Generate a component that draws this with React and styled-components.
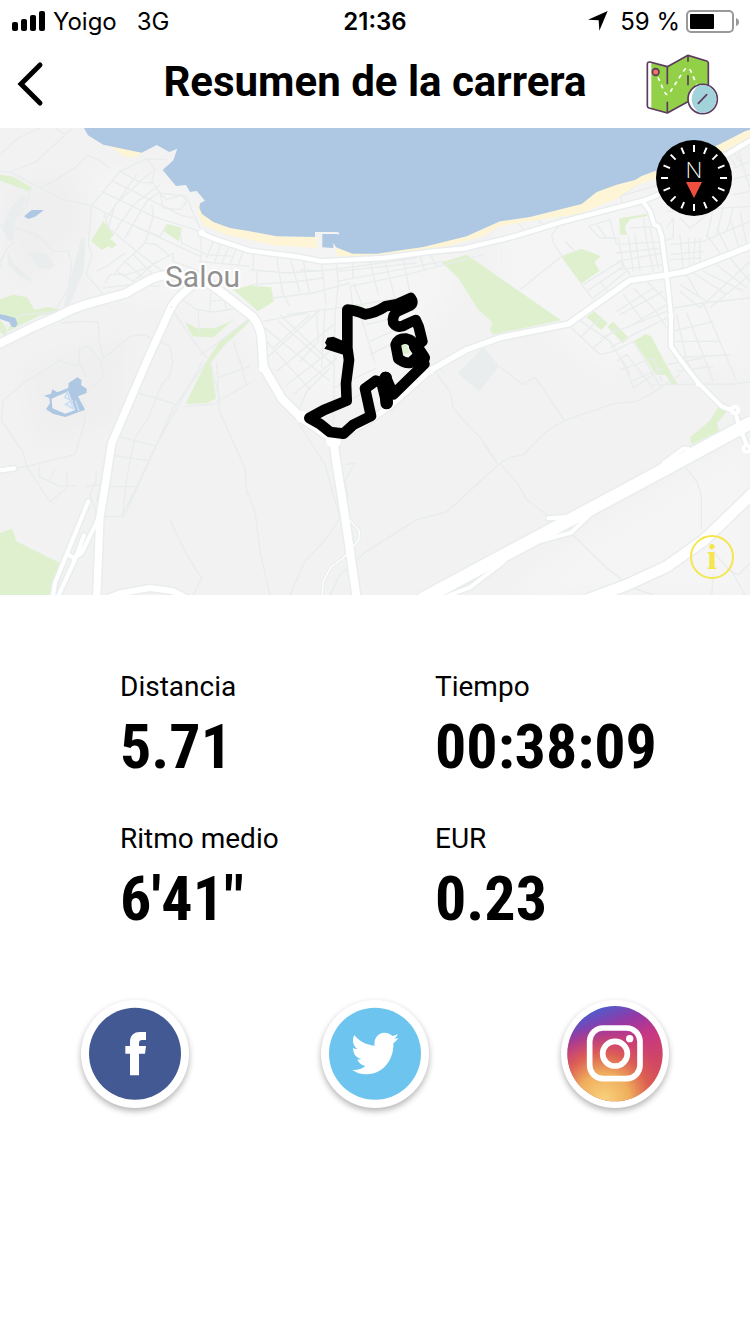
import React from "react";
import styled, { createGlobalStyle } from "styled-components";

const GlobalStyle = createGlobalStyle`
  *, *::before, *::after { box-sizing: border-box; }
  body {
    margin: 0;
    background: #fff;
    color: #000;
    font-family: Roboto, "Liberation Sans", sans-serif;
  }
`;

const Screen = styled.main`
  display: flex;
  flex-direction: column;
  min-height: 100vh;
  background: #fff;
`;

const StatusBar = styled.div`
  display: grid;
  grid-template-columns: 1fr auto 1fr;
  align-items: center;
  height: 40px;
  padding: 0 11px;
  font-family: Inter, "Liberation Sans", sans-serif;
  font-size: 24px;
  line-height: 40px;
`;

const StatusGroup = styled.div`
  display: flex;
  align-items: center;
  justify-content: ${(p) => (p.$end ? "flex-end" : "flex-start")};
  gap: 8px;
`;

const StatusText = styled.span`
  padding-top: 2px;
  margin-left: ${(p) => (p.$spaced ? 12 : 0)}px;
`;

const Battery = styled.span`
  display: flex;
  margin-left: -2px;
`;

const Clock = styled.time`
  padding-top: 2px;
  font-weight: 600;
`;

const Header = styled.header`
  display: grid;
  grid-template-columns: 104px 1fr 104px;
  align-items: center;
  height: 88px;
`;

const Title = styled.h1`
  margin: 0;
  padding-bottom: 4px;
  font-size: 42px;
  font-weight: 700;
  line-height: 48px;
  text-align: center;
  white-space: nowrap;
`;

const IconButton = styled.button`
  display: flex;
  align-items: center;
  justify-content: center;
  padding: 0;
  border: 0;
  background: none;
  color: inherit;
  cursor: pointer;
`;

const BackButton = styled(IconButton)`
  width: 60px;
  height: 60px;
`;

const MapButton = styled(IconButton)`
  justify-content: flex-start;
`;

const MapPanel = styled.section`
  position: relative;
  width: 100%;
  aspect-ratio: 750 / 467;
  overflow: hidden;
  background: #f3f3f3;
`;

const MapCanvas = styled.svg`
  display: block;
  width: 100%;
  height: 100%;
`;

const CompassButton = styled(IconButton)`
  position: absolute;
  top: 12px;
  right: 18px;
  width: 76px;
  height: 76px;
  border-radius: 50%;
`;

const InfoButton = styled(IconButton)`
  position: absolute;
  right: 16px;
  bottom: 16px;
  width: 44px;
  height: 44px;
  border: 2px solid #f4e64c;
  border-radius: 50%;
  color: #f4e64c;
  font-family: "Liberation Serif", serif;
  font-size: 36px;
  font-weight: 700;
  line-height: 40px;
`;

const Stats = styled.dl`
  display: grid;
  grid-template-columns: 1fr 1fr;
  row-gap: 40px;
  margin: 0;
  padding: 76px 0 65px 16%;
`;

const Stat = styled.div`
  display: flex;
  flex-direction: column;
  gap: 8px;
`;

const StatLabel = styled.dt`
  font-size: 28px;
  line-height: 32px;
`;

const StatValue = styled.dd`
  margin: 0;
  font-family: "Roboto Condensed", "Liberation Sans Narrow", Roboto, sans-serif;
  font-size: 62px;
  font-weight: 700;
  line-height: 72px;
`;

const ShareRow = styled.nav`
  display: grid;
  grid-template-columns: repeat(3, 1fr);
  justify-items: center;
  padding: 0 15px 40px;
`;

const ShareButton = styled(IconButton)`
  width: 108px;
  height: 108px;
  border-radius: 50%;
  background: #fff;
  box-shadow: 0 3px 6px rgba(0, 0, 0, 0.3);
`;

/* Map geometry, drawn on a 2250 x 1401 grid. */

const parks = [
  "M0 140 L40 146 L92 178 L88 190 L0 158Z",
  "M310 279 L342 320 L330 332 L351 350 L336 361 L326 355 L305 366 L273 338Z",
  "M502 287 L547 300 L536 340 L490 309Z",
  "M0 513 L40 500 L82 508 L103 546 L142 537 L180 545 L178 556 L120 562 L20 612 L40 575 L0 555Z",
  "M0 575 L20 600 L18 625 L0 612Z",
  "M555 583 L590 600 L645 601 L699 576 L640 628 L578 625Z",
  "M750 570 L745 585 L670 655 L632 705 L648 812 L620 825 L557 828 L620 700 L660 640Z",
  "M700 485 L750 472 L813 478 L822 520 L774 550Z",
  "M1325 403 L1400 380 L1500 450 L1683 577 L1500 615 L1478 620 L1470 605 L1477 582 L1435 545 L1375 450Z",
  "M1683 385 L1745 362 L1803 385 L1783 403 L1799 428 L1743 467Z",
  "M1858 271 L1940 258 L1942 264 L1890 274 L1874 297 L1882 321 L1860 319Z",
  "M1760 568 L1783 550 L1823 586 L1804 607Z",
  "M1822 596 L1839 581 L1887 630 L1868 646Z",
  "M1902 638 L1938 618 L1955 626 L1998 710 L2032 768 L2015 770 L1998 740 L1968 740Z",
  "M0 1215 L36 1202 L49 1240 L178 1304 L148 1401 L0 1401Z",
  "M2070 928 L2128 880 L2155 838 L2180 852 L2150 885 L2158 908 L2075 950Z",
  "M1058 530 L1075 528 L1092 545 L1062 572Z",
  "M1198 645 L1216 642 L1230 675 L1206 680Z",
];

const shades = [
  "M245 326 L257 335 L250 430 L212 525 L188 545 L210 460 L230 380Z",
  "M70 200 L80 215 L45 275 L42 335 L22 338 L10 290 L30 240Z",
  "M80 370 L140 378 L164 410 L150 424 L118 420Z",
  "M22 370 L40 405 L102 462 L60 447 L24 410Z",
  "M1450 657 L1497 715 L1438 790 L1374 736Z",
];

const ponds = [
  "M72 265 L95 246 L132 246 L105 266 L85 273Z",
  "M0 558 L22 563 L46 570 L53 588 L46 598 L35 596 L28 583 L0 573Z",
  "M132 803 L153 797 L157 784 L172 793 L205 780 L206 765 L232 748 L245 756 L243 771 L260 782 L260 795 L234 805 L255 845 L196 867 L160 858 L138 844 L150 825 L148 810Z",
];

const streets = [
  /* north-west countryside */
  "M0 80 L55 30 L120 0 M165 0 L192 18 L215 5 M0 130 L30 132 L110 100 L195 20 M30 132 L120 180 L190 215 L275 232",
  "M330 120 L300 98 L262 82 L230 115 L160 160 L120 180 M275 232 L265 350 L276 380 L258 440 L312 500",
  "M95 175 L78 240 L40 275 L45 300 L110 320 L160 370 L205 370 L215 410 L205 480 L165 550 M0 400 L22 360 L40 345 L0 290",
  "M0 420 L12 380 M110 320 L100 345 M0 610 L60 560 L180 550 M185 585 L240 580 L295 582 L297 640 L310 690 L350 660 L390 625 L430 620 L510 655 L518 705",
  /* western old town */
  "M275 232 L360 130 L440 92 L500 95 M440 92 L465 125 L455 162 M360 130 L420 163 L460 165 L480 195 L560 205",
  "M340 160 L460 220 L545 262 L580 270 M305 190 L460 265 L600 310 M275 232 L312 252 L460 320 L600 385 M312 252 L325 300 L410 370 L500 440",
  "M325 300 L345 230 L455 130 M345 310 L400 230 L480 170 M375 330 L440 220 L480 190 M435 345 L460 265 L455 230 M320 270 L410 140",
  "M480 195 L500 215 L545 200 L560 220 L540 245 L490 240 L480 195 M560 205 L575 245 L600 300 M410 298 L480 325 L500 290",
  "M340 440 L375 400 L410 370 L435 345 L470 350 L510 385 M315 465 L330 440 L380 440 L440 420 L520 375 M375 400 L430 450 M400 380 L460 440 M350 430 L400 460 L470 400",
  "M290 430 L320 415 L375 375 M310 480 L390 470 L480 475 M520 375 L520 400 L600 430 M540 300 L545 345 L620 380 M600 320 L605 370 L600 400 L750 415",
  "M640 340 L620 390 M662 350 L645 400 M685 360 L665 405 M707 365 L690 410 M730 370 L712 415 M620 380 L700 385",
  "M540 510 L590 545 L640 552 L720 540 M632 495 L630 545 M595 545 L597 615 M665 490 L680 545 M630 520 L680 515",
  "M520 550 L600 665 L620 690 M750 570 L640 655 L600 680 M700 640 L720 705",
  /* seafront grid */
  "M750 425 L860 435 L1000 425 L1250 390 M750 470 L880 462 L970 450 M762 372 L758 430 M772 430 L770 480 M830 385 L845 480 L850 500",
  "M870 390 L900 495 M910 395 L918 450 L930 500 M965 405 L978 530 M1010 410 L1015 470 M1058 405 L1058 450 M1110 400 L1135 500 M1155 400 L1185 510",
  "M1210 395 L1230 495 M1260 385 L1275 430 M1290 380 L1310 415 M900 425 L960 430 M1010 430 L1250 405 M1010 460 L1330 400",
  "M1050 475 L1220 440 L1450 380 M820 510 L940 495 L1050 465 M850 500 L870 535 M860 560 L1050 535 L1250 500 M790 580 L920 555",
  "M1015 470 L1005 560 L1000 900 M1050 475 L1060 540 M1060 465 L1090 540 M1075 540 L1125 705 M1100 590 L1180 570 M1110 640 L1200 600 M1110 680 L1170 650",
  "M795 600 L990 760 M800 640 L930 785 M840 560 L1000 710 M835 580 L960 690 M820 660 L930 560 M800 690 L960 545 M830 730 L1000 590 M860 770 L1030 640",
  "M880 800 L1010 690 M900 840 L920 790 L990 720 M950 560 L955 640 L900 700 M975 540 L965 720 M1000 780 L1130 720 M1000 840 L1100 790",
  /* eastern grid */
  "M1545 275 L1580 315 M1610 268 L1635 300 M1670 250 L1685 275 M1660 345 L1655 320 L1680 290 L1720 280 M1695 340 L1725 370 M1685 385 L1560 485 M1660 345 L1690 390",
  "M1765 295 L1800 330 L1850 330 M1765 295 L1830 275 L1850 350 M1790 290 L1820 330 M1850 350 L1990 340 M1848 375 L1990 360 M1850 400 L1990 375",
  "M1855 425 L1990 410 M1855 330 L1870 410 L1890 440 M1885 325 L1900 430 M1905 320 L1920 430 M1930 270 L1940 340 L1960 430 M1950 300 L1975 420 M1890 300 L1980 295",
  "M1750 470 L1860 400 L1890 440 M1760 490 L1870 415 M1780 510 L1880 430 M1743 467 L1780 515 M1800 460 L1830 500 M1860 205 L1980 170 M1870 230 L1860 205 L1900 180",
  "M2000 250 L2250 235 M2000 300 L2020 270 L2020 330 L1990 340 M2040 270 L2070 300 L2110 270 L2130 240 M2140 240 L2120 330 M2170 235 L2150 320 M2200 240 L2180 310",
  "M2010 350 L2110 340 L2250 280 M2010 380 L2110 370 M2010 395 L2105 390 M2040 320 L2050 430 M2065 330 L2070 425 M2085 330 L2080 420 M2100 330 L2100 410 M2120 320 L2170 390 M2150 300 L2190 380 M2190 270 L2220 370 M2220 250 L2240 350",
  "M2060 440 L2100 510 M2080 435 L2180 500 M2110 430 L2230 490 M2150 410 L2240 480 M2190 390 L2250 460 M2040 470 L2120 520 M2040 490 L2100 540 L2250 400 M2130 540 L2250 440 M2020 540 L2110 525 L2250 510",
  "M2190 85 L2210 120 M2200 75 L2230 115 M2200 120 L2250 100 M2180 160 L2250 140 M2200 200 L2250 190 M2215 70 L2250 180",
  "M1800 630 L2013 545 M1830 660 L1900 620 L2010 565 M1900 480 L1960 540 L2000 600 M1870 500 L1930 580 M1850 550 L1960 480 M1860 560 L1990 490 M1880 600 L2000 530 M1940 460 L2010 530",
  "M1715 600 L1800 680 L1840 670 M1730 570 L1830 640 L1890 740 M1740 630 L1800 570 M1780 660 L1850 600 M1840 670 L1900 640 L1985 780 M1850 700 L1880 680 L1960 780",
  "M1860 726 L1960 690 M1890 760 L1990 720 M1900 780 L1960 740 M1870 700 L1900 780 M2030 560 L2060 700 L2100 760 M2060 555 L2140 760 M2110 525 L2210 760 M2020 610 L2140 580 M2020 640 L2160 640",
  "M2020 690 L2190 680 M2030 730 L2140 715 M2000 710 L2110 690 M1960 690 L1985 760 M2040 740 L1950 800 M1960 770 L2200 768 L2250 762",
  /* southern countryside */
  "M1500 716 L1568 770 L1605 748 L1695 880 M1500 1006 L1530 988 L1570 980 L1645 905 L1700 875 L1845 826 L1910 820 L1985 780",
  "M1500 1006 L1555 1070 L1580 1115 L1640 1160 M1718 1220 L1820 1320 L1900 1380 L1960 1401 M2055 1016 L2090 1060 L2104 1100 L2104 1205 M2140 1270 L2190 1330 L2215 1340 L2250 1305 M2140 1340 L2135 1401 M2190 1320 L2235 1401",
  "M1310 735 L1350 790 L1360 840 L1390 875 L1450 940 L1495 1010 L1340 1152 L1250 1175 L1100 1270 L1020 1340 L990 1401",
  "M895 885 L975 1010 L1020 1170 L980 1230 L915 1300 L870 1401 M750 1115 L765 1150 L780 1270 L810 1401",
  "M650 705 L658 850 L735 1020 L740 1090 L750 1110 M510 1175 L560 1280 L605 1350 L580 1401 M650 750 L750 715",
  "M620 700 L520 840 L410 1076 L365 1165 M610 696 L470 950 L375 1160 M555 835 L640 828 L750 765 M520 696 L510 740 L480 780 L445 870 L405 930 L380 1050 L368 1165",
  "M415 795 L525 828 M355 925 L470 955 M335 982 L445 998 M320 1076 L410 1076 M315 1166 L372 1166 M630 700 L660 815 M720 696 L740 775",
  "M235 696 L260 750 M300 696 L312 750 L275 775 M180 698 L70 765 L8 820 L5 880 L68 970 L80 1015 L225 980 L255 880 L250 810",
  "M45 1021 L80 1015 L150 1122 L200 1080 L200 1030 M120 1010 L115 1045 L180 1075 L230 1072 M165 1020 L148 1060 M258 1074 L310 1070 M288 1025 L288 1060 L270 1100 L300 1180",
  "M180 698 L235 715 L240 660 L265 655 L300 696 M325 946 L290 1120 M1310 705 L1330 735 M1035 1010 L1065 1005 L1050 1030 L1035 1060 L1045 1110 M1450 950 L1495 1010",
];

const majorRoads = [
  { w: 24, d: "M0 646 L100 597 L180 562 Q215 542 255 530 L375 497 L450 455 Q480 440 520 440 L600 448 L650 482 L757 565 Q778 590 784 625 L790 716 L845 811 L900 866 L1000 935 L1008 996 L1035 1166 L1070 1410" },
  { w: 22, d: "M570 478 Q530 510 515 535 L440 700 L335 946 L315 1076 L300 1166 L290 1410" },
  { w: 16, d: "M1000 935 L1090 890 L1170 835 L1290 728 L1400 665 L1500 629 L1705 588 L1890 457 L2000 441 L2060 430 L2250 355" },
  { w: 13, d: "M603 316 L650 335 L750 368 L900 387 L965 400 L1150 390 L1300 370 L1390 362 L1500 336 L1550 323 L1680 283 L1930 218 L2000 190 L2180 80 L2250 38" },
  { w: 12, d: "M1930 222 L1950 250 L1962 290 L1975 295 L1985 325 L2000 441 L2013 560 L2013 655 L2045 700 L2095 765 L2165 835 L2205 850 L2216 890 L2240 950 L2240 962" },
  { w: 12, d: "M265 1120 L165 1365 L158 1410 M252 1222 L228 1288 L172 1410 M295 1172 L245 1275 L222 1290 L205 1280" },
  { w: 13, d: "M0 1027 L42 1021" },
  { w: 12, d: "M1645 1171 L1700 1167 M1595 1246 L1713 1214 L1780 1150 M1990 1006 L2050 962 L2065 962 M1340 1405 L1410 1378 L1510 1302" },
  { w: 18, d: "M320 1412 L360 1396 L450 1380 L520 1390 L560 1410" },
  { w: 38, d: "M1270 1412 L1500 1288 L1800 1128 L1960 1042 L2250 885" },
  { w: 32, d: "M1770 1412 L1880 1371 L2000 1316 L2110 1238 L2180 1171 L2260 1094" },
];

const minorRoad = "M1050 1178 L1078 1208 L1076 1236 L1030 1290 L992 1318 L970 1360 L966 1401";

const roundabouts = [
  [605, 315, 9], [515, 537, 11], [790, 720, 14], [905, 866, 18], [1000, 938, 22],
  [2000, 441, 9], [2013, 564, 8], [2095, 767, 8], [2205, 846, 16], [2240, 962, 15], [1290, 728, 11],
];

const run =
  "M1042 660 L1042 545 Q1065 546 1095 559 Q1125 556 1157 535 L1190 529 L1232 510 Q1245 528 1225 535 L1192 550 Q1175 562 1180 585 Q1195 605 1220 588 L1247 576 L1256 596 L1267 640 L1245 658 " +
  "Q1240 635 1220 632 Q1195 630 1187 650 L1195 692 Q1215 707 1232 704 L1262 676 L1273 708 L1180 799 L1157 747 L1160 827 L1145 765 L1128 758 L1095 782 L1113 864 L1060 890 L1030 917 L990 912 L960 888 L928 870 L972 846 L1040 818 L1038 766 L1047 696 Z";

function RouteMap() {
  return (
    <MapCanvas viewBox="0 0 2250 1401" preserveAspectRatio="xMidYMid slice" role="img" aria-label="Recorrido de la carrera en Salou">
      <defs>
        <filter id="relief" x="-20%" y="-20%" width="140%" height="140%">
          <feGaussianBlur stdDeviation="30" />
        </filter>
      </defs>
      <rect width="2250" height="1401" fill="#f2f2f2" />
      <g fill="#f5f5f5" filter="url(#relief)">
        <path d="M300 120 L560 190 L640 340 L1400 400 L1180 800 L900 820 L700 560 L280 480Z" />
        <path d="M1500 300 L2250 100 L2250 700 L1800 720 L1500 480Z" />
        <path d="M1750 1240 L2250 940 L2250 1401 L1550 1401Z" />
      </g>
      <g fill="#efefef" filter="url(#relief)">
        <path d="M0 180 L220 130 L250 300 L60 480Z" />
        <path d="M60 720 L380 620 L360 880 L120 960Z" />
      </g>
      {shades.map((d) => <path key={d} d={d} fill="#eaeded" />)}
      {parks.map((d) => <path key={d} d={d} fill="#def0cd" />)}
      <g fill="none" stroke="#e8ecec" strokeWidth="4" strokeLinejoin="round">
        {streets.map((d) => <path key={d} d={d} />)}
      </g>
      {ponds.map((d) => <path key={d} d={d} fill="#aec7e2" />)}
      <path d="M155 812 L205 790 L226 846 L196 857 L157 841Z" fill="#f1f1f1" />
      <path d="M202 792 L220 842 L197 829 L216 818 L195 808Z M226 818 L237 850" fill="none" stroke="#c9ddf5" strokeWidth="5" />
      <g fill="#fdf5d6">
        <path d="M318 48 L435 70 L400 90 L372 84Z" />
        <path d="M596 225 L594 260 L612 292 L680 320 L750 335 L820 352 L952 360 L952 320 L800 300Z" />
        <path d="M1002 352 L1014 386 L1150 386 L1300 366 L1450 325 L1500 294 L1620 275 L1740 257 L1850 212 L1910 172 L1980 148 L2160 75 L2250 35 L2250 0 L1500 250Z" />
      </g>
      <path
        fill="#aec7e2"
        d="M252 0 L264 22 L310 50 L425 74 L470 51 L508 72 L532 62 L520 97 L488 126 L528 174 L558 171 L570 192 L590 189 L605 206 L615 218 L600 226 L598 240 L606 258 L640 282 L690 300 L750 310 L830 325 L945 327 L950 313 L966 313 L966 358 L1000 360 L1000 345 L1008 358 L1058 377 L1130 377 L1270 357 L1400 325 L1500 280 L1590 267 L1745 228 L1790 192 L1850 170 L1905 156 L1925 144 L2060 94 L2160 48 L2235 10 L2250 5 L2250 0Z"
      />
      <path d="M948 315 H1012 L1017 318" fill="none" stroke="#f3f3f3" strokeWidth="6" />
      <path d="M945 312 H967 V360 H952 V326 H945Z" fill="#f3f3f3" />
      <g fill="none" strokeLinejoin="round" strokeLinecap="round">
        {majorRoads.map((r) => (
          <path key={r.d} d={r.d} stroke="#e9eded" strokeWidth={r.w + 9} />
        ))}
        <path d={minorRoad} stroke="#e9eded" strokeWidth="10" />
        {majorRoads.map((r) => (
          <path key={r.d} d={r.d} stroke="#fff" strokeWidth={r.w} />
        ))}
        <path d={minorRoad} stroke="#fff" strokeWidth="4" />
      </g>
      {roundabouts.map(([cx, cy, r]) => <circle key={`${cx}-${cy}`} cx={cx} cy={cy} r={r} fill="#fff" />)}
      <g fill="#eceeee">
        <circle cx="514" cy="537" r="3" />
        <circle cx="2205" cy="846" r="4" />
        <circle cx="2240" cy="962" r="4" />
      </g>
      <text x="495" y="477" fontFamily="Roboto, sans-serif" fontSize="90" fill="#929292" stroke="#fff" strokeWidth="12" strokeLinejoin="round" paintOrder="stroke">Salou</text>
      <g fill="none" stroke="#000">
        <path d={run} strokeWidth="32" strokeLinejoin="round" />
        <path d="M1157 750 L1160 825" strokeWidth="38" strokeLinecap="round" />
        <path d="M1247 655 L1270 690" strokeWidth="40" strokeLinecap="round" />
      </g>
      <path d="M975 644 L982 629 L1000 626 L1032 640 L1044 660 L1042 684 L973 662 L980 652Z" />
    </MapCanvas>
  );
}

function SignalIcon() {
  return (
    <svg width="34" height="20" viewBox="0 0 34 20" aria-hidden="true">
      <rect x="1" y="11" width="6" height="9" rx="2" />
      <rect x="10" y="8" width="6" height="12" rx="2" />
      <rect x="19" y="4" width="6" height="16" rx="2" />
      <rect x="28" y="0" width="6" height="20" rx="2" />
    </svg>
  );
}

function LocationIcon() {
  return (
    <svg width="24" height="20" viewBox="0 0 72 60" aria-hidden="true">
      <path d="M0 26 L59 0 L34 59 L32 28Z" />
    </svg>
  );
}

function BatteryIcon() {
  return (
    <svg width="53" height="24" viewBox="0 0 53 24" aria-hidden="true">
      <rect x="1" y="2" width="46" height="21" rx="4" fill="none" stroke="#999" strokeWidth="2" />
      <rect x="4" y="5" width="24" height="15" rx="1" />
      <path d="M50 9 Q53 10 53 13 Q53 16 50 17Z" fill="#999" />
    </svg>
  );
}

function ChevronIcon() {
  return (
    <svg width="28" height="46" viewBox="0 0 28 46" fill="none" stroke="#000" strokeWidth="5" strokeLinecap="round" aria-hidden="true">
      <path d="M24 4 L5 23 L24 42" />
    </svg>
  );
}

function MapIcon() {
  return (
    <svg width="73" height="61" viewBox="48 40 219 183" fill="none" stroke="#5d3a5e" strokeWidth="6" strokeLinejoin="round" strokeLinecap="round" aria-hidden="true">
      <path d="M52 70 Q52 63 60 64 L112 78 L174 44 L230 61 Q235 63 235 68 V175 L174 183 L112 217 L57 202 Q52 200 52 195Z" fill="#92d147" stroke="none" />
      <path d="M52 68 L64 66 V203 L52 198Z" fill="#fff" stroke="none" />
      <path d="M172 184 L112 217 L57 202 Q52 200 52 195 V70 Q52 63 60 64 L112 78 L174 44 L230 61 Q235 63 235 68 V140" strokeWidth="5" />
      <path d="M112 78 V131 M112 183 V216 M174 45 V63 M174 104 V134" strokeWidth="5" strokeLinecap="butt" />
      <path d="M84 110 L101 149 Q110 170 120 155 L160 92 Q172 73 183 92 L200 132" stroke="#fff" strokeWidth="5" strokeDasharray="12 12" strokeLinecap="butt" />
      <circle cx="77" cy="94" r="10" fill="#f07663" strokeWidth="5" />
      <circle cx="218" cy="175" r="44" fill="#fff" strokeWidth="5" />
      <path d="M208 134 A42 42 0 1 1 208 216 A48 48 0 0 1 208 134Z" fill="#a3d3da" stroke="none" />
      <path d="M205 188 L230 162" strokeWidth="5" />
    </svg>
  );
}

const ticks = Array.from({ length: 16 }, (_, i) => i * 22.5);

function CompassIcon() {
  return (
    <svg width="76" height="76" viewBox="0 0 76 76" aria-hidden="true">
      <circle cx="38" cy="38" r="38" />
      {ticks.map((a) => (
        <path key={a} d="M38 5 V12" stroke="#fff" strokeWidth="2" transform={`rotate(${a} 38 38)`} />
      ))}
      <text x="38" y="38" textAnchor="middle" fontFamily="Inter, sans-serif" fontWeight="200" fontSize="22" fill="#fff">N</text>
      <path d="M30 42 H46 L38 58Z" fill="#ef4f3f" />
    </svg>
  );
}

function FacebookIcon() {
  return (
    <svg width="108" height="108" viewBox="0 0 324 324" aria-hidden="true">
      <circle cx="162" cy="161" r="138" fill="#435994" />
      <path d="M147 226 V161 H133 V138 H147 V126 C147 106 159 96 177 96 H195 V120 H183 Q174 120 174 130 V138 H195 L192 161 H174 V226Z" fill="#fff" />
    </svg>
  );
}

function TwitterIcon() {
  return (
    <svg width="108" height="108" viewBox="783 60 324 324" aria-hidden="true">
      <circle cx="945" cy="221" r="138" fill="#6dc5ef" />
      <path d="M883 165 C897 184 920 195 944 197 C940 175 955 158 973 158 C984 158 992 163 997 168 C1003 167 1008 165 1013 162 C1011 168 1008 172 1003 176 C1007 176 1011 175 1015 174 C1011 180 1007 185 1000 190 C1003 230 975 283 920 283 C903 283 888 278 877 270 C893 271 906 267 916 258 C903 256 895 248 892 238 C896 239 900 239 904 237 C888 233 879 221 879 203 C883 206 887 207 892 207 C879 197 875 180 883 165Z" fill="#fff" />
    </svg>
  );
}

function InstagramIcon() {
  return (
    <svg width="108" height="108" viewBox="63 60 324 324" aria-hidden="true">
      <defs>
        <linearGradient id="igBase" x1="0.25" y1="0" x2="0.6" y2="0.9">
          <stop offset="0.05" stopColor="#4f5bcc" />
          <stop offset="0.28" stopColor="#9538a5" />
          <stop offset="0.5" stopColor="#c63784" />
          <stop offset="1" stopColor="#d5504f" />
        </linearGradient>
        <radialGradient id="igGlow" cx="0.38" cy="0.98" r="0.78">
          <stop offset="0" stopColor="#f9d27e" />
          <stop offset="0.35" stopColor="#efae5c" />
          <stop offset="0.62" stopColor="#de6251" stopOpacity="0.9" />
          <stop offset="1" stopColor="#cc3c70" stopOpacity="0" />
        </radialGradient>
      </defs>
      <circle cx="225" cy="221" r="143" fill="url(#igBase)" />
      <circle cx="225" cy="221" r="143" fill="url(#igGlow)" />
      <g fill="none" stroke="#fff" strokeWidth="17">
        <rect x="149" y="144" width="151" height="152" rx="40" />
        <circle cx="225" cy="221" r="37" />
      </g>
      <circle cx="269" cy="176" r="11" fill="#fff" />
    </svg>
  );
}

const stats = [
  { label: "Distancia", value: "5.71" },
  { label: "Tiempo", value: "00:38:09" },
  { label: "Ritmo medio", value: "6'41\"" },
  { label: "EUR", value: "0.23" },
];

const networks = [
  { name: "Facebook", Icon: FacebookIcon },
  { name: "Twitter", Icon: TwitterIcon },
  { name: "Instagram", Icon: InstagramIcon },
];

export default function App() {
  return (
    <>
      <GlobalStyle />
      <Screen>
        <StatusBar>
          <StatusGroup>
            <SignalIcon />
            <StatusText>Yoigo</StatusText>
            <StatusText $spaced>3G</StatusText>
          </StatusGroup>
          <Clock>21:36</Clock>
          <StatusGroup $end>
            <LocationIcon />
            <StatusText>59 %</StatusText>
            <Battery>
              <BatteryIcon />
            </Battery>
          </StatusGroup>
        </StatusBar>
        <Header>
          <BackButton type="button" aria-label="Volver">
            <ChevronIcon />
          </BackButton>
          <Title>Resumen de la carrera</Title>
          <MapButton type="button" aria-label="Ver mapa">
            <MapIcon />
          </MapButton>
        </Header>
        <MapPanel>
          <RouteMap />
          <CompassButton type="button" aria-label="Orientar al norte">
            <CompassIcon />
          </CompassButton>
          <InfoButton type="button" aria-label="Información del mapa">i</InfoButton>
        </MapPanel>
        <Stats>
          {stats.map((s) => (
            <Stat key={s.label}>
              <StatLabel>{s.label}</StatLabel>
              <StatValue>{s.value}</StatValue>
            </Stat>
          ))}
        </Stats>
        <ShareRow aria-label="Compartir">
          {networks.map(({ name, Icon }) => (
            <ShareButton key={name} type="button" aria-label={`Compartir en ${name}`}>
              <Icon />
            </ShareButton>
          ))}
        </ShareRow>
      </Screen>
    </>
  );
}
